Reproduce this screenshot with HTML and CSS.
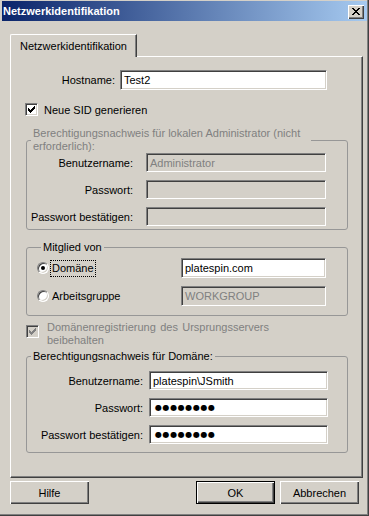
FILE: index.html
```html
<!DOCTYPE html>
<html lang="de">
<head>
    <meta charset="UTF-8">
    <title>Netzwerkidentifikation</title>
    <link rel="stylesheet" href="styles.css">
</head>
<body>
    <div class="window">
        <div class="titlebar">
            <span class="title">Netzwerkidentifikation</span>
            <span class="close">
                <svg width="16" height="14" viewBox="0 0 16 14" shape-rendering="crispEdges">
                    <path d="M4 3h2v1H4zM10 3h2v1h-2zM5 4h2v1H5zM9 4h2v1H9zM6 5h4v1H6zM7 6h2v1H7zM6 7h4v1H6zM5 8h2v1H5zM9 8h2v1H9zM4 9h2v1H4zM10 9h2v1h-2z" fill="#000"/>
                </svg>
            </span>
        </div>

        <div class="tabs">
            <div class="tab">Netzwerkidentifikation</div>
        </div>

        <div class="panel">
            <div class="host-row">
                <label class="host-label">Hostname:</label>
                <div class="field host-field">Test2</div>
            </div>

            <div class="check-row">
                <span class="check">
                    <svg width="9" height="9" viewBox="0 0 9 9" shape-rendering="crispEdges"><path d="M1 3v3l2 2 5-5V0L3 5z" fill="#000"/></svg>
                </span>
                <span>Neue SID generieren</span>
            </div>

            <fieldset class="group group-local">
                <legend class="legend-wrap disabled-text">Berechtigungsnachweis für lokalen Administrator (nicht erforderlich):</legend>
                <div class="frow">
                    <label class="lbl-local">Benutzername:</label>
                    <div class="field field-off local-field">Administrator</div>
                </div>
                <div class="frow">
                    <label class="lbl-local">Passwort:</label>
                    <div class="field field-off local-field"></div>
                </div>
                <div class="frow">
                    <label class="lbl-local">Passwort bestätigen:</label>
                    <div class="field field-off local-field"></div>
                </div>
            </fieldset>

            <fieldset class="group group-member">
                <legend>Mitglied von</legend>
                <div class="radio-row">
                    <div class="choice">
                        <span class="radio"><span class="dot"></span></span>
                        <span class="focus">Domäne</span>
                    </div>
                    <div class="field member-field">platespin.com</div>
                </div>
                <div class="radio-row">
                    <div class="choice">
                        <span class="radio"></span>
                        <span class="choice-text">Arbeitsgruppe</span>
                    </div>
                    <div class="field field-off member-field">WORKGROUP</div>
                </div>
            </fieldset>

            <div class="keep-row">
                <span class="check check-off">
                    <svg width="9" height="9" viewBox="0 0 9 9" shape-rendering="crispEdges"><path d="M1 3v3l2 2 5-5V0L3 5z" fill="#808080"/></svg>
                </span>
                <span class="keep-text disabled-text">Domänenregistrierung des Ursprungsservers beibehalten</span>
            </div>

            <fieldset class="group group-domain">
                <legend>Berechtigungsnachweis für Domäne:</legend>
                <div class="frow">
                    <label class="lbl-domain">Benutzername:</label>
                    <div class="field domain-field">platespin\JSmith</div>
                </div>
                <div class="frow">
                    <label class="lbl-domain">Passwort:</label>
                    <div class="field domain-field"><span class="dots">●●●●●●●●</span></div>
                </div>
                <div class="frow">
                    <label class="lbl-domain">Passwort bestätigen:</label>
                    <div class="field domain-field"><span class="dots">●●●●●●●●</span></div>
                </div>
            </fieldset>
        </div>

        <div class="buttons">
            <button class="btn">Hilfe</button>
            <div class="btn-group">
                <button class="btn btn-default">OK</button>
                <button class="btn">Abbrechen</button>
            </div>
        </div>
    </div>
</body>
</html>
```

FILE: styles.css
```css
body {
    margin: 0;
    font-family: "Liberation Sans", Arial, sans-serif;
    font-size: 11px;
    color: #000;
    background-color: #d4d0c8;
}
.window {
    width: 369px;
    height: 516px;
    box-sizing: border-box;
    padding: 1px 1px 0 2px;
    background-color: #d4d0c8;
    border-right: 1px solid #404040;
    border-bottom: 1px solid #404040;
    box-shadow: inset -1px -1px 0 #808080;
}
.titlebar {
    height: 20px;
    display: flex;
    align-items: center;
    justify-content: space-between;
    padding: 0 3px 0 1px;
    background: linear-gradient(to right, #0a246a, #a6caf0);
}
.title {
    color: #fff;
    font-weight: bold;
    font-size: 11px;
}
.close {
    width: 16px;
    height: 14px;
    margin-top: 1px;
    box-sizing: border-box;
    background-color: #d4d0c8;
    box-shadow: inset 1px 1px 0 #fff, inset -1px -1px 0 #404040, inset -2px -2px 0 #808080;
    display: flex;
}
.tabs {
    display: flex;
    margin: 13px 0 0 8px;
}
.tab {
    position: relative;
    z-index: 1;
    width: 127px;
    height: 23px;
    box-sizing: border-box;
    margin-bottom: -1px;
    border-top: 1px solid #fff;
    border-left: 1px solid #fff;
    border-right: 1px solid #404040;
    border-top-left-radius: 2px;
    box-shadow: inset -1px 0 0 #808080;
    background-color: #d4d0c8;
    display: flex;
    align-items: center;
    justify-content: center;
    padding-bottom: 1px;
}
.panel {
    width: 353px;
    height: 422px;
    box-sizing: border-box;
    margin-left: 8px;
    border-top: 1px solid #fff;
    border-left: 1px solid #fff;
    border-right: 1px solid #404040;
    border-bottom: 1px solid #404040;
    box-shadow: inset -1px -1px 0 #808080;
    overflow: hidden;
}
.field {
    box-sizing: border-box;
    height: 19px;
    padding-left: 3px;
    display: flex;
    align-items: center;
    background-color: #fff;
    border-top: 1px solid #808080;
    border-left: 1px solid #808080;
    border-right: 1px solid #fff;
    border-bottom: 1px solid #fff;
    box-shadow: inset 1px 1px 0 #404040, inset -1px -1px 0 #d4d0c8;
    white-space: nowrap;
}
.field-off {
    background-color: #d4d0c8;
    color: #808080;
}
.disabled-text {
    color: #808080;
}
.host-row {
    display: flex;
    align-items: center;
    margin-top: 13px;
}
.host-label {
    width: 104px;
    margin-right: 5px;
    text-align: right;
}
.host-field {
    width: 207px;
    height: 20px;
}
.check-row {
    display: flex;
    align-items: center;
    margin: 13px 0 0 14px;
    gap: 6px;
}
.check {
    width: 13px;
    height: 13px;
    box-sizing: border-box;
    flex-shrink: 0;
    display: flex;
    align-items: center;
    justify-content: center;
    background-color: #fff;
    border-top: 1px solid #808080;
    border-left: 1px solid #808080;
    border-right: 1px solid #fff;
    border-bottom: 1px solid #fff;
    box-shadow: inset 1px 1px 0 #404040, inset -1px -1px 0 #d4d0c8;
}
.check-off {
    background-color: #d4d0c8;
}
.group {
    margin: 0 14px 0 15px;
    padding: 0;
    min-width: 0;
    border: 1px solid #979797;
    border-radius: 3px;
}
.group legend {
    padding: 0 2px;
    margin-left: 4px;
    line-height: 13px;
}
.legend-wrap {
    width: 280px;
    box-sizing: border-box;
}
.group-local {
    margin-top: 11px;
    padding-bottom: 3px;
}
.frow {
    display: flex;
    align-items: center;
    margin-top: 8px;
}
.frow:first-of-type {
    margin-top: 0;
}
.lbl-local {
    width: 106px;
    margin-right: 13px;
    text-align: right;
}
.local-field {
    width: 180px;
}
.group-member {
    margin-top: 11px;
    padding: 4px 0 9px 10px;
}
.radio-row {
    display: flex;
    align-items: center;
    height: 20px;
}
.radio-row + .radio-row {
    margin-top: 8px;
}
.choice {
    width: 144px;
    display: flex;
    align-items: center;
}
.radio {
    width: 12px;
    height: 12px;
    box-sizing: border-box;
    border-radius: 50%;
    background-color: #fff;
    border: 1px solid;
    border-color: #808080 #fff #fff #808080;
    box-shadow: inset 1px 1px 0 #404040, inset -1px -1px 0 #d4d0c8;
    display: flex;
    align-items: center;
    justify-content: center;
}
.dot {
    width: 4px;
    height: 4px;
    border-radius: 50%;
    background-color: #000;
}
.focus {
    margin-left: 1px;
    padding: 1px;
    line-height: 13px;
    border: 1px dotted #000;
}
.choice-text {
    margin-left: 3px;
}
.member-field {
    width: 145px;
    height: 20px;
}
.keep-row {
    display: flex;
    align-items: flex-start;
    margin: 5px 0 0 15px;
}
.keep-row .check {
    margin-top: 4px;
}
.keep-text {
    width: 222px;
    margin-left: 8px;
    line-height: 13px;
    text-align: justify;
}
.group-domain {
    margin-top: 3px;
    padding: 8px 0 8px 0;
}
.lbl-domain {
    width: 116px;
    margin-right: 6px;
    text-align: right;
}
.domain-field {
    width: 179px;
}
.dots {
    font-family: "DejaVu Sans", sans-serif;
    font-size: 8px;
    letter-spacing: 0.6px;
    padding-left: 2px;
}
.buttons {
    display: flex;
    justify-content: space-between;
    margin-top: 3px;
    padding: 0 8px;
}
.btn-group {
    display: flex;
    gap: 5px;
}
.btn {
    width: 79px;
    height: 23px;
    box-sizing: border-box;
    padding: 0;
    font-family: "Liberation Sans", Arial, sans-serif;
    font-size: 11px;
    color: #000;
    background-color: #d4d0c8;
    border: none;
    border-radius: 0;
    box-shadow: inset 1px 1px 0 #fff, inset -1px -1px 0 #404040, inset -2px -2px 0 #808080;
}
.btn-default {
    border: 1px solid #000;
}
```
